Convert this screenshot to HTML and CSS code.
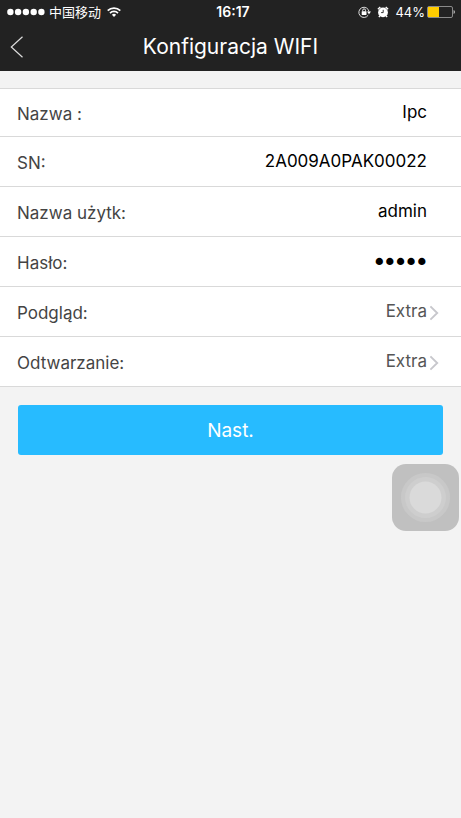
FILE: index.html
```html
<!DOCTYPE html>
<html lang="pl">
<head>
<meta charset="utf-8">
<meta name="viewport" content="width=device-width, initial-scale=1">
<title>Konfiguracja WIFI</title>
<link rel="stylesheet" href="styles.css">
</head>
<body>
<header class="top">
  <div class="status">
    <div class="status-left">
      <svg class="signal" width="38" height="8" viewBox="0 0 38 8" aria-hidden="true">
        <g fill="#fff"><circle cx="3.4" cy="4" r="3.2"/><circle cx="11.1" cy="4" r="3.2"/><circle cx="18.9" cy="4" r="3.2"/><circle cx="26.7" cy="4" r="3.2"/><circle cx="34.4" cy="4" r="3.2"/></g>
      </svg>
      <span class="carrier" lang="zh">中国移动</span>
      <svg width="14" height="10" viewBox="0 0 14 10" aria-hidden="true">
        <g fill="none" stroke="#fff" stroke-width="1.7"><path d="M.7 3.7a8.9 8.9 0 0 1 12.6 0"/><path d="M3 6.1a5.6 5.6 0 0 1 8 0"/></g>
        <path d="M7 10 4.9 7.8a3 3 0 0 1 4.2 0z" fill="#fff"/>
      </svg>
    </div>
    <time class="clock">16:17</time>
    <div class="status-right">
      <svg width="13" height="12" viewBox="0 0 13 12" aria-hidden="true">
        <path d="M10.2 9.2A5.1 5.1 0 1 1 11 5.6" fill="none" stroke="#ddd" stroke-width="1"/>
        <path d="M9 5.6h4L11 8.2z" fill="#fff"/>
        <rect x="3.7" y="5.2" width="4.8" height="3.7" rx=".4" fill="#fff"/>
        <path d="M4.7 5.4V4.3a1.4 1.4 0 0 1 2.8 0v1.1" fill="none" stroke="#fff" stroke-width=".9"/>
      </svg>
      <svg class="alarm" width="12" height="12" viewBox="0 0 12 12" aria-hidden="true">
        <circle cx="6" cy="6.4" r="4.9" fill="#fff"/>
        <path d="M.9 3.2 3.3 1M11.1 3.2 8.7 1M2.9 9.8l-1 1.3M9.1 9.8l1 1.3" stroke="#fff" stroke-width="1.4"/>
        <path d="M6.2 3.8v2.8H4.1" fill="none" stroke="#222" stroke-width=".9"/>
      </svg>
      <span class="percent">44%</span>
      <svg width="28" height="12" viewBox="0 0 28 12" aria-hidden="true">
        <rect x=".5" y=".5" width="25" height="11" rx="1.5" fill="none" stroke="#8a8a8a"/>
        <rect x="1" y="1" width="11" height="10" fill="#fc0"/>
        <path d="M26.6 4a2.2 2.2 0 0 1 0 4z" fill="#ccc"/>
      </svg>
    </div>
  </div>
  <div class="nav">
    <button class="back" type="button" aria-label="Wstecz">
      <svg width="14" height="22" viewBox="0 0 14 22" aria-hidden="true"><path d="M12.5.8 1.3 11l11.2 10.2" fill="none" stroke="#ddd" stroke-width="1.2"/></svg>
    </button>
    <h1 class="title">Konfiguracja WIFI</h1>
  </div>
</header>
<main>
  <form>
    <div class="list">
      <div class="row"><label class="label" for="name">Nazwa :</label><input class="value" id="name" type="text" value="Ipc"></div>
      <div class="row"><label class="label" for="sn">SN:</label><input class="value" id="sn" type="text" value="2A009A0PAK00022"></div>
      <div class="row"><label class="label" for="user">Nazwa użytk:</label><input class="value" id="user" type="text" value="admin"></div>
      <div class="row"><label class="label" for="pass">Hasło:</label><input class="value password" id="pass" type="password" value="admin"></div>
      <div class="row"><label class="label" for="live">Podgląd:</label><button class="value choice" id="live" type="button">Extra<svg class="chevron" width="10" height="16" viewBox="0 0 10 16" aria-hidden="true"><path d="m1.4 1.4 6.8 6.6-6.8 6.6" fill="none" stroke="#c7c7cc" stroke-width="1.9"/></svg></button></div>
      <div class="row"><label class="label" for="playback">Odtwarzanie:</label><button class="value choice" id="playback" type="button">Extra<svg class="chevron" width="10" height="16" viewBox="0 0 10 16" aria-hidden="true"><path d="m1.4 1.4 6.8 6.6-6.8 6.6" fill="none" stroke="#c7c7cc" stroke-width="1.9"/></svg></button></div>
    </div>
    <button class="next" type="button">Nast.</button>
  </form>
</main>
<button class="assist" type="button" aria-label="AssistiveTouch">
  <svg width="67" height="67" viewBox="0 0 67 67" aria-hidden="true">
    <circle cx="33.5" cy="33.5" r="24.5" fill="#c8c8c8"/><circle cx="33.5" cy="33.5" r="20.5" fill="#cecece"/><circle cx="33.5" cy="33.5" r="16" fill="#dadada"/>
  </svg>
</button>
</body>
</html>
```
FILE: styles.css
```css
* { box-sizing: border-box; }

body {
  margin: 0;
  min-height: 100vh;
  background: #f3f3f3;
  color: #444;
  font-family: Inter, "Noto Sans CJK SC", sans-serif;
  font-size: 17px;
}

button, input { font: inherit; border: 0; padding: 0; margin: 0; background: none; }
svg { display: block; flex: none; }

.top { background: #222; color: #fff; }

.status {
  display: grid;
  grid-template-columns: 1fr auto 1fr;
  align-items: center;
  height: 23px;
  padding: 0 6px 0 7px;
  font-size: 13px;
  line-height: 16px;
}
.status-left, .status-right { display: flex; align-items: center; }
.status-left { gap: 4px; }
.carrier { margin-right: 2px; }
.status-right { justify-content: flex-end; }
.alarm { margin: 0 6px; }
.percent { margin-right: 2px; }
.clock { margin-left: 4px; font-size: 14px; font-weight: 600; }

.nav {
  display: grid;
  grid-template-columns: 40px 1fr 40px;
  align-items: center;
  height: 48px;
}
.back { padding-left: 10px; height: 46px; }
.title {
  margin: 0;
  text-align: center;
  font-size: 21px;
  line-height: 28px;
  font-weight: 400;
}

.list {
  margin-top: 17px;
  background: #fff;
  border-top: 1px solid #d9d9d9;
}
.row {
  display: flex;
  align-items: center;
  height: 50px;
  padding: 0 22px 2px 17px;
  border-bottom: 1px solid #d9d9d9;
}
.row:first-child { height: 48px; }
.label { padding-top: 4px; line-height: 24px; }
.value {
  flex: 1;
  min-width: 0;
  margin-right: 12px;
  height: 24px;
  line-height: 24px;
  text-align: right;
  color: #000;
}
/* The stroke thickens the masking dots. */
.password {
  padding-top: 3px;
  font-family: "DejaVu Sans", sans-serif;
  font-size: 18px;
  -webkit-text-stroke: 2px #000;
}
.choice {
  display: flex;
  justify-content: flex-end;
  align-items: center;
  gap: 2px;
  margin-right: 0;
  color: #555;
}
.chevron { margin-top: 4px; }

.next {
  display: block;
  width: calc(100% - 36px);
  height: 50px;
  margin: 18px;
  border-radius: 3px;
  background: #27bbff;
  color: #fff;
  font-size: 19px;
}

.assist {
  position: fixed;
  top: 464px;
  right: 2px;
  border-radius: 14px;
  background: #c0c0c0;
}
```
